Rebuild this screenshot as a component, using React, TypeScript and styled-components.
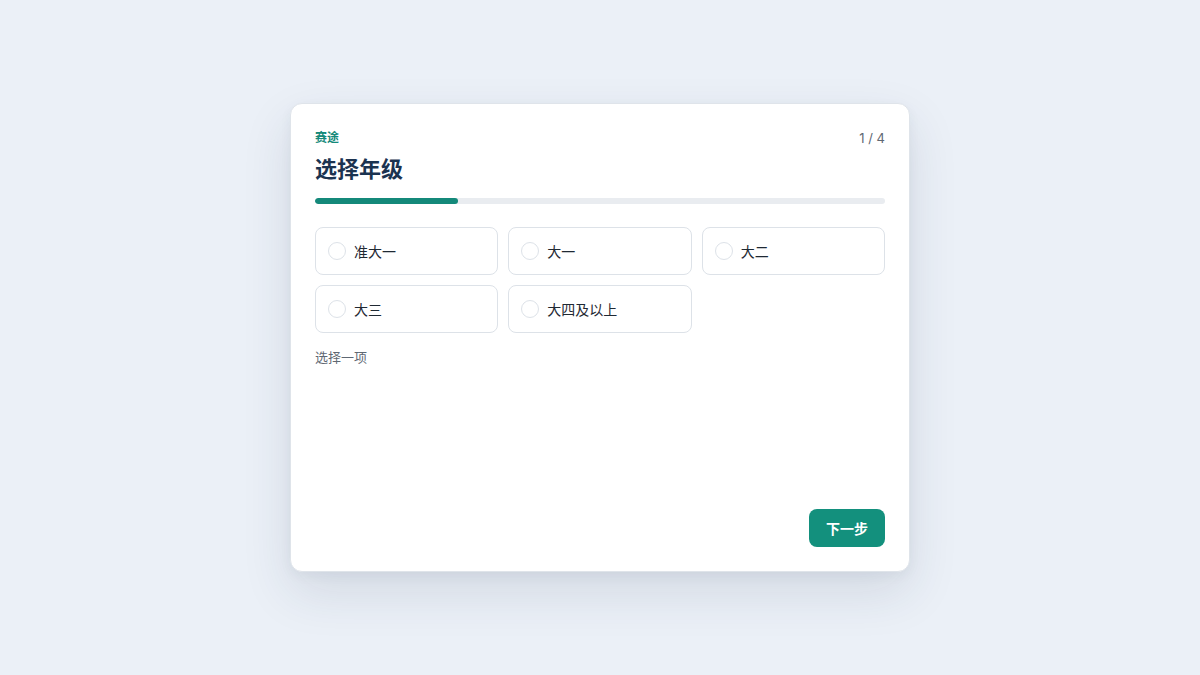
import React, { useState } from "react";
import styled, { createGlobalStyle } from "styled-components";

const Global = createGlobalStyle`
  html, body { margin: 0; padding: 0; }
  body {
    background: #ebf0f7;
    font-family: "Inter", "Noto Sans CJK SC", sans-serif;
    -webkit-font-smoothing: antialiased;
  }
`;

const Page = styled.div`
  width: 1200px;
  height: 675px;
  display: flex;
  align-items: center;
  justify-content: center;
`;

const Card = styled.div`
  box-sizing: border-box;
  width: 620px;
  height: 469px;
  background: #fff;
  border: 1px solid #dfe4ea;
  border-radius: 12px;
  padding: 24px;
  display: flex;
  flex-direction: column;
  box-shadow: 0 20px 50px rgba(30, 50, 80, 0.12), 0 4px 12px rgba(30, 50, 80, 0.05);
`;

const TopRow = styled.div`
  display: flex;
  justify-content: space-between;
  align-items: center;
  height: 20px;
`;

const Brand = styled.div`
  align-self: flex-start;
  line-height: 18px;
  font-family: "Noto Sans CJK SC", sans-serif;
  font-size: 12px;
  font-weight: 700;
  color: #14897a;
`;

const Step = styled.div`
  font-family: "Inter", sans-serif;
  font-size: 13px;
  color: #5f6873;
`;

const Title = styled.h1`
  margin: 5px 0 0;
  font-family: "Noto Sans CJK SC", sans-serif;
  font-size: 22px;
  line-height: 28px;
  font-weight: 700;
  color: #1b3350;
`;

const Track = styled.div`
  margin-top: 17px;
  height: 6px;
  border-radius: 3px;
  background: #e9ecf0;
  overflow: hidden;
`;

const Fill = styled.div`
  height: 100%;
  border-radius: 3px;
  background: #14897a;
`;

const Grid = styled.div`
  margin-top: 23px;
  display: grid;
  grid-template-columns: repeat(3, 1fr);
  gap: 10px 10px;
`;

const Option = styled.button<{ $active: boolean }>`
  box-sizing: border-box;
  height: 48px;
  display: flex;
  align-items: center;
  gap: 8px;
  padding: 0 12px;
  background: #fff;
  border: 1px solid ${(p) => (p.$active ? "#14897a" : "#dde2e8")};
  border-radius: 8px;
  cursor: pointer;
  font-family: "Noto Sans CJK SC", sans-serif;
  font-size: 14px;
  color: #1f2933;
  text-align: left;
`;

const Radio = styled.span<{ $active: boolean }>`
  box-sizing: border-box;
  width: 18px;
  height: 18px;
  border-radius: 50%;
  border: ${(p) => (p.$active ? "5px solid #14897a" : "1px solid #dde2e8")};
  flex-shrink: 0;
`;

const Hint = styled.div`
  margin-top: 14px;
  font-family: "Noto Sans CJK SC", sans-serif;
  font-size: 13px;
  color: #5f6873;
`;

const Footer = styled.div`
  margin-top: auto;
  display: flex;
  justify-content: flex-end;
`;

const NextButton = styled.button`
  height: 38px;
  padding: 0 17px;
  border: none;
  border-radius: 8px;
  background: #13907d;
  color: #fff;
  font-family: "Noto Sans CJK SC", sans-serif;
  font-size: 14px;
  font-weight: 700;
  cursor: pointer;
`;

const options = ["准大一", "大一", "大二", "大三", "大四及以上"];

export default function App() {
  const [sel, setSel] = useState<number | null>(null);
  const progress = 25;
  return (
    <>
      <Global />
      <Page>
        <Card>
          <TopRow>
            <Brand>赛途</Brand>
            <Step>1 / 4</Step>
          </TopRow>
          <Title>选择年级</Title>
          <Track>
            <Fill style={{ width: `${progress}%` }} />
          </Track>
          <Grid>
            {options.map((o, i) => (
              <Option key={o} $active={sel === i} onClick={() => setSel(i)}>
                <Radio $active={sel === i} />
                {o}
              </Option>
            ))}
          </Grid>
          <Hint>选择一项</Hint>
          <Footer>
            <NextButton>下一步</NextButton>
          </Footer>
        </Card>
      </Page>
    </>
  );
}
